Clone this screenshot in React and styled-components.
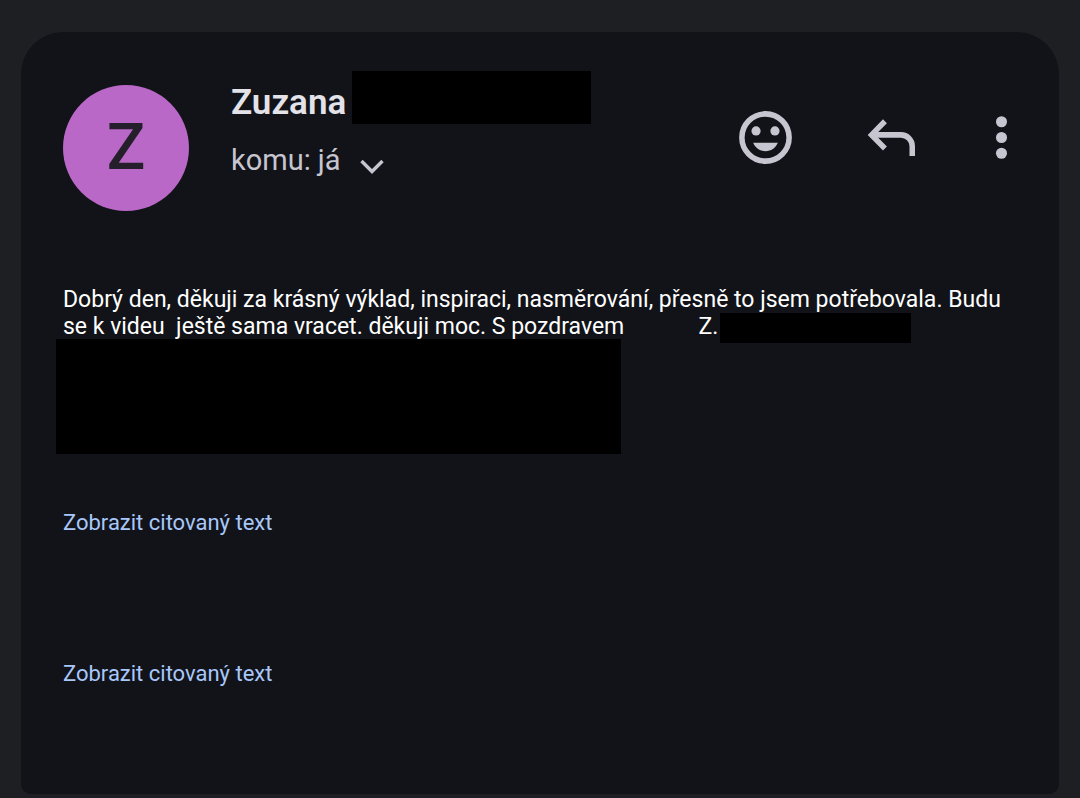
import styled, { createGlobalStyle } from 'styled-components';

const GlobalStyle = createGlobalStyle`
    * {
        box-sizing: border-box;
    }

    body {
        margin: 0;
        background-color: #1e1f23;
        font-family: Roboto, "Noto Sans", sans-serif;
    }
`;

const Page = styled.main`
    min-height: 100vh;
    display: flex;
    padding: 32px 21px 4px;
`;

const Card = styled.article`
    flex: 1;
    min-width: 0;
    padding: 39px 42px 42px;
    background-color: #121318;
    border-radius: 42px 42px 10px 10px;
`;

const Header = styled.header`
    display: flex;
    align-items: flex-start;
    gap: 42px;
`;

const Avatar = styled.div`
    width: 126px;
    height: 126px;
    margin-top: 14px;
    flex-shrink: 0;
    display: flex;
    align-items: center;
    justify-content: center;
    border-radius: 50%;
    background-color: #b968c7;
    color: #241f2b;
    font-size: 64px;
    font-weight: 500;
    line-height: 78px;
`;

const Sender = styled.div`
    flex: 1;
    min-width: 0;
`;

const NameRow = styled.div`
    display: flex;
    align-items: center;
    gap: 6px;
    height: 53px;
`;

const Name = styled.h1`
    margin: 0;
    padding-top: 10px;
    color: #e3e2e9;
    font-size: 35px;
    font-weight: 600;
    line-height: 40px;
`;

const Redacted = styled.span`
    display: block;
    width: ${props => props.$width}px;
    height: ${props => props.$height}px;
    background-color: #000;
`;

const RedactedInline = styled(Redacted)`
    display: inline-block;
    vertical-align: middle;
    margin: -4px 0 -4px 2px;
`;

const RedactedBlock = styled(Redacted)`
    max-width: 100%;
    margin: -1px 0 0 -7px;
`;

const Recipient = styled.button`
    display: flex;
    align-items: center;
    gap: 15px;
    margin-top: 17px;
    padding: 0;
    border: none;
    background: none;
    color: #c6c5d0;
    font-family: inherit;
    font-size: 29px;
    line-height: 38px;
    cursor: pointer;

    svg {
        margin-top: 12px;
    }
`;

const Actions = styled.div`
    display: flex;
    gap: 63px;
    margin-top: 35px;
`;

const IconButton = styled.button`
    display: flex;
    align-items: center;
    justify-content: center;
    width: ${props => (props.$narrow ? 31 : 63)}px;
    height: 63px;
    padding: 0;
    border: none;
    background: none;
    color: #c6c5d0;
    cursor: pointer;

    svg {
        flex-shrink: 0;
    }
`;

const Body = styled.div`
    margin-top: 75px;
`;

const Message = styled.p`
    margin: 0;
    color: #fff;
    font-size: 23px;
    line-height: 27px;
    white-space: pre-wrap;
`;

const QuoteLink = styled.a`
    display: block;
    width: fit-content;
    margin-top: ${props => props.$gap}px;
    color: #a8c7fa;
    font-size: 22px;
    line-height: 27px;
    text-decoration: none;
`;

const ChevronIcon = () => (
    <svg width="32" height="26" viewBox="0 0 32 26" fill="none" stroke="currentColor" strokeWidth="3.4">
        <path d="M5.5 8 L16 18.5 L26.5 8" />
    </svg>
);

const SmileIcon = () => (
    <svg width="63" height="63" viewBox="0 0 24 24" fill="currentColor">
        <circle cx="12" cy="12" r="9" fill="none" stroke="currentColor" strokeWidth="2.1" />
        <circle cx="8.4" cy="9.5" r="1.75" />
        <circle cx="15.6" cy="9.5" r="1.75" />
        <path d="M7.3 14h9.4c-.8 2-2.6 3.2-4.7 3.2s-3.9-1.2-4.7-3.2z" />
    </svg>
);

const ReplyIcon = () => (
    <svg width="63" height="63" viewBox="0 0 24 24" fill="none" stroke="currentColor" strokeWidth="2.1">
        <path d="M9.5 5.8 L4.4 11 L9.5 16.2" />
        <path d="M4.5 11H15.6a4.3 4.3 0 0 1 4.3 4.3V19" />
    </svg>
);

const MoreIcon = () => (
    <svg width="63" height="63" viewBox="0 0 24 24" fill="currentColor">
        <circle cx="12" cy="6" r="2.1" />
        <circle cx="12" cy="12" r="2.1" />
        <circle cx="12" cy="18" r="2.1" />
    </svg>
);

const App = () => {
    return (
        <>
            <GlobalStyle />
            <Page>
                <Card>
                    <Header>
                        <Avatar>Z</Avatar>
                        <Sender>
                            <NameRow>
                                <Name>Zuzana</Name>
                                <Redacted $width={239} $height={53} />
                            </NameRow>
                            <Recipient type="button">
                                komu: já
                                <ChevronIcon />
                            </Recipient>
                        </Sender>
                        <Actions>
                            <IconButton type="button" aria-label="Přidat reakci">
                                <SmileIcon />
                            </IconButton>
                            <IconButton type="button" aria-label="Odpovědět">
                                <ReplyIcon />
                            </IconButton>
                            <IconButton type="button" aria-label="Další možnosti" $narrow>
                                <MoreIcon />
                            </IconButton>
                        </Actions>
                    </Header>
                    <Body>
                        <Message>
                            {'Dobrý den, děkuji za krásný výklad, inspiraci, nasměrování, přesně to jsem potřebovala. Budu se k videu  ještě sama vracet. děkuji moc. S pozdravem             Z.'}
                            <RedactedInline $width={191} $height={30} />
                        </Message>
                        <RedactedBlock as="div" $width={565} $height={115} />
                        <QuoteLink href="#citace-1" $gap={55}>Zobrazit citovaný text</QuoteLink>
                        <QuoteLink href="#citace-2" $gap={124}>Zobrazit citovaný text</QuoteLink>
                    </Body>
                </Card>
            </Page>
        </>
    );
};

export default App;
